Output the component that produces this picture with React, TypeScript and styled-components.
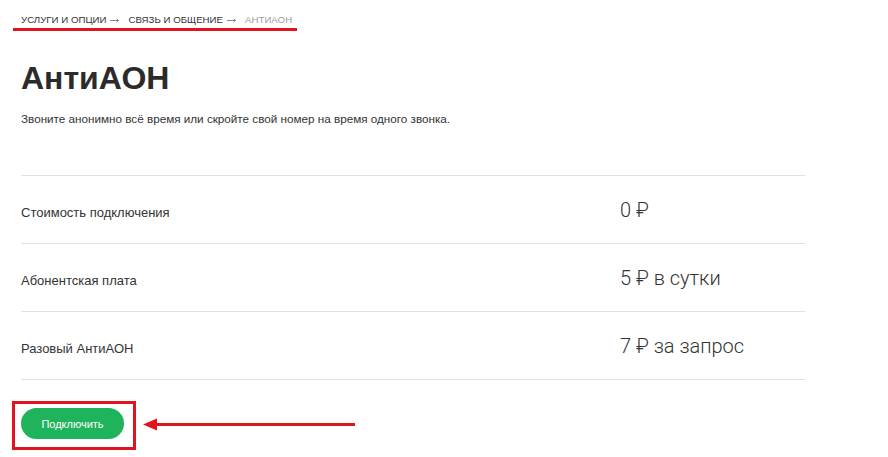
import React from "react";
import styled, { createGlobalStyle } from "styled-components";

const GlobalStyle = createGlobalStyle`
  html, body {
    margin: 0;
    padding: 0;
    background: #fff;
  }
  body {
    font-family: "Liberation Sans", Arial, sans-serif;
    color: #333;
  }
`;

const Page = styled.div`
  padding: 9px 0 0 21px;
  width: 784px;
`;

const Breadcrumbs = styled.nav`
  display: inline-flex;
  align-items: center;
  margin-left: -8px;
  padding: 0 5px 3px 8px;
  border-bottom: 3px solid #e0141e;
  font-size: 9.7px;
  text-transform: uppercase;
`;

const Crumb = styled.span<{ $current?: boolean }>`
  color: ${(p) => (p.$current ? "#a0a0a0" : "#333")};
`;

const Sep = styled.svg`
  display: block;
  margin: 1px 9px 0 4px;
`;

const Title = styled.h1`
  margin: 27px 0 0;
  font-size: 32px;
  line-height: 40px;
  font-weight: 700;
  color: #2b2b2b;
`;

const Lead = styled.p`
  margin: 14px 0 0;
  font-size: 11.7px;
  line-height: 14px;
  color: #333;
`;

const Table = styled.div`
  margin-top: 49px;
  border-top: 1px solid #e2e2e2;
`;

const Row = styled.div`
  display: grid;
  grid-template-columns: 599px 1fr;
  align-items: center;
  height: 67px;
  border-bottom: 1px solid #e2e2e2;
`;

const Label = styled.div`
  font-size: 13px;
  color: #333;
  padding-top: 5px;
`;

const Value = styled.div`
  font-family: Roboto, "Liberation Sans", sans-serif;
  font-weight: 300;
  font-size: 20px;
  color: #333;
  padding-top: 1px;
`;

const Actions = styled.div`
  display: flex;
  align-items: center;
  gap: 7px;
  margin-top: 21px;
`;

const HighlightBox = styled.div`
  margin-left: -9px;
  padding: 4px 9px 8px 6px;
  border: 3px solid #e0141e;
`;

const ConnectButton = styled.button`
  display: block;
  width: 103px;
  height: 31px;
  border: none;
  border-radius: 16px;
  background: #1fb35b;
  color: #fff;
  font-family: "Liberation Sans", Arial, sans-serif;
  font-size: 11px;
  cursor: pointer;
`;

const Arrow = styled.svg`
  display: block;
  margin-top: -3px;
`;

const rows = [
  { label: "Стоимость подключения", value: "0 ₽" },
  { label: "Абонентская плата", value: "5 ₽ в сутки" },
  { label: "Разовый АнтиАОН", value: "7 ₽ за запрос" },
];

function CrumbArrow() {
  return (
    <Sep width="9" height="5" viewBox="0 0 9 5">
      <path d="M0 2.5H8.5M6.5 0.8L8.5 2.5L6.5 4.2" stroke="#666" strokeWidth="0.8" fill="none" />
    </Sep>
  );
}

export default function App() {
  return (
    <>
      <GlobalStyle />
      <Page>
        <Breadcrumbs>
          <Crumb>Услуги и опции</Crumb>
          <CrumbArrow />
          <Crumb>Связь и общение</Crumb>
          <CrumbArrow />
          <Crumb $current>АнтиАОН</Crumb>
        </Breadcrumbs>
        <Title>АнтиАОН</Title>
        <Lead>
          Звоните анонимно всё время или скройте свой номер на время одного
          звонка.
        </Lead>
        <Table>
          {rows.map((r) => (
            <Row key={r.label}>
              <Label>{r.label}</Label>
              <Value>{r.value}</Value>
            </Row>
          ))}
        </Table>
        <Actions>
          <HighlightBox>
            <ConnectButton>Подключить</ConnectButton>
          </HighlightBox>
          <Arrow width="213" height="13" viewBox="0 0 213 13">
            <line x1="10" y1="6.5" x2="212" y2="6.5" stroke="#e0141e" strokeWidth="3" />
            <polygon points="0,6.5 14,0.5 14,12.5" fill="#e0141e" />
          </Arrow>
        </Actions>
      </Page>
    </>
  );
}
